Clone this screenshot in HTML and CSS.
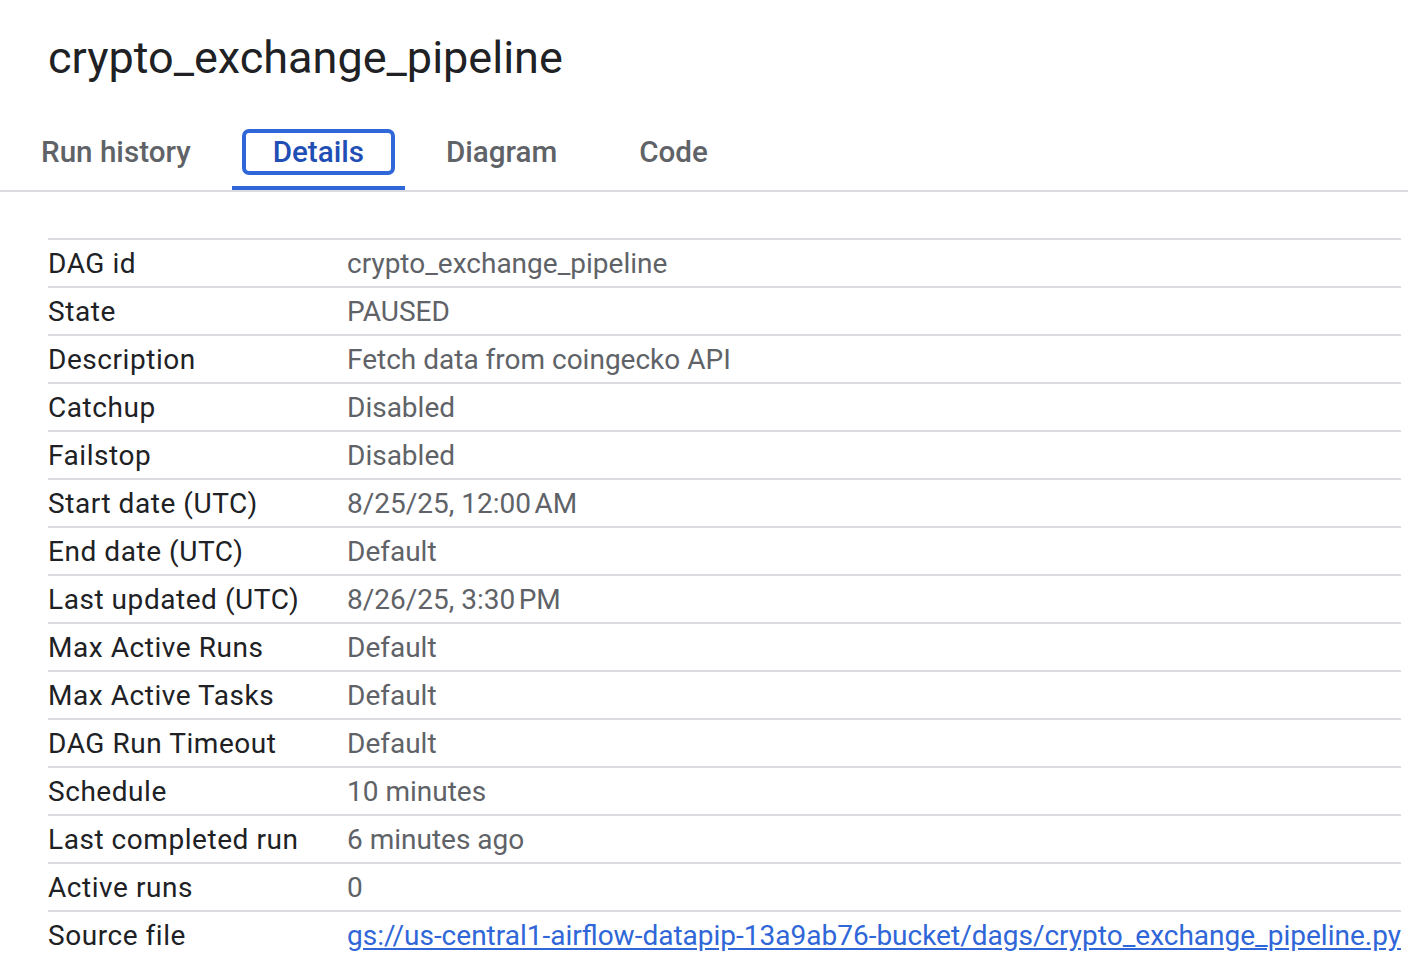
FILE: index.html
```html
<!DOCTYPE html>
<html>
<head>
<meta charset="utf-8">
<link rel="stylesheet" href="styles.css">
</head>
<body>
<div class="page">
  <h1 class="title">crypto_exchange_pipeline</h1>
  <nav class="tabs">
    <div class="tab"><span class="label">Run history</span></div>
    <div class="tab active"><span class="label">Details</span></div>
    <div class="tab"><span class="label">Diagram</span></div>
    <div class="tab"><span class="label">Code</span></div>
  </nav>
  <table class="details">
    <tr><th>DAG id</th><td>crypto_exchange_pipeline</td></tr>
    <tr><th>State</th><td>PAUSED</td></tr>
    <tr><th>Description</th><td>Fetch data from coingecko API</td></tr>
    <tr><th>Catchup</th><td>Disabled</td></tr>
    <tr><th>Failstop</th><td>Disabled</td></tr>
    <tr><th>Start date (UTC)</th><td>8/25/25, 12:00&#8239;AM</td></tr>
    <tr><th>End date (UTC)</th><td>Default</td></tr>
    <tr><th>Last updated (UTC)</th><td>8/26/25, 3:30&#8239;PM</td></tr>
    <tr><th>Max Active Runs</th><td>Default</td></tr>
    <tr><th>Max Active Tasks</th><td>Default</td></tr>
    <tr><th>DAG Run Timeout</th><td>Default</td></tr>
    <tr><th>Schedule</th><td>10 minutes</td></tr>
    <tr><th>Last completed run</th><td>6 minutes ago</td></tr>
    <tr><th>Active runs</th><td>0</td></tr>
    <tr><th>Source file</th><td><a class="link" href="#">gs://us-central1-airflow-datapip-13a9ab76-bucket/dags/crypto_exchange_pipeline.py</a></td></tr>
  </table>
</div>
</body>
</html>
```
FILE: styles.css
```css
html, body {
  margin: 0;
  padding: 0;
  background: #ffffff;
  font-family: Roboto, "Noto Sans", sans-serif;
  overflow: hidden;
}
.page {
  width: 1408px;
  height: 958px;
  overflow: hidden;
}
.title {
  margin: 0;
  padding: 30px 0 0 48px;
  height: 90px;
  box-sizing: border-box;
  font-size: 45px;
  font-weight: 400;
  line-height: 56px;
  color: #202124;
}
.tabs {
  display: flex;
  align-items: flex-end;
  height: 102px;
  box-sizing: border-box;
  border-bottom: 2px solid #dadce0;
}
.tab {
  height: 64px;
  box-sizing: border-box;
  padding: 3px 10px 0;
  border-bottom: 4px solid transparent;
  font-size: 29.6px;
  font-weight: 500;
  color: #5f6368;
}
.label {
  display: block;
  border: 4px solid transparent;
  border-radius: 7px;
  padding: 0 27px;
  line-height: 38px;
}
.tab.active {
  color: #1f4fb4;
  border-bottom-color: #2f66d8;
}
.tab.active .label {
  border-color: #2f66d8;
}
.details {
  margin: 46px 0 0 48px;
  width: 1353px;
  border-collapse: collapse;
  font-size: 28px;
}
.details tr {
  border-top: 2px solid #dadce0;
}
.details th, .details td {
  height: 46px;
  padding: 0;
  text-align: left;
  vertical-align: middle;
  white-space: nowrap;
  line-height: 45px;
}
.details th {
  width: 299px;
  font-weight: 400;
  letter-spacing: 0.55px;
  color: #202124;
}
.details td {
  color: #5f6368;
}
.link {
  color: #2f66d8;
  text-decoration: underline;
  text-underline-offset: 3px;
}
```
